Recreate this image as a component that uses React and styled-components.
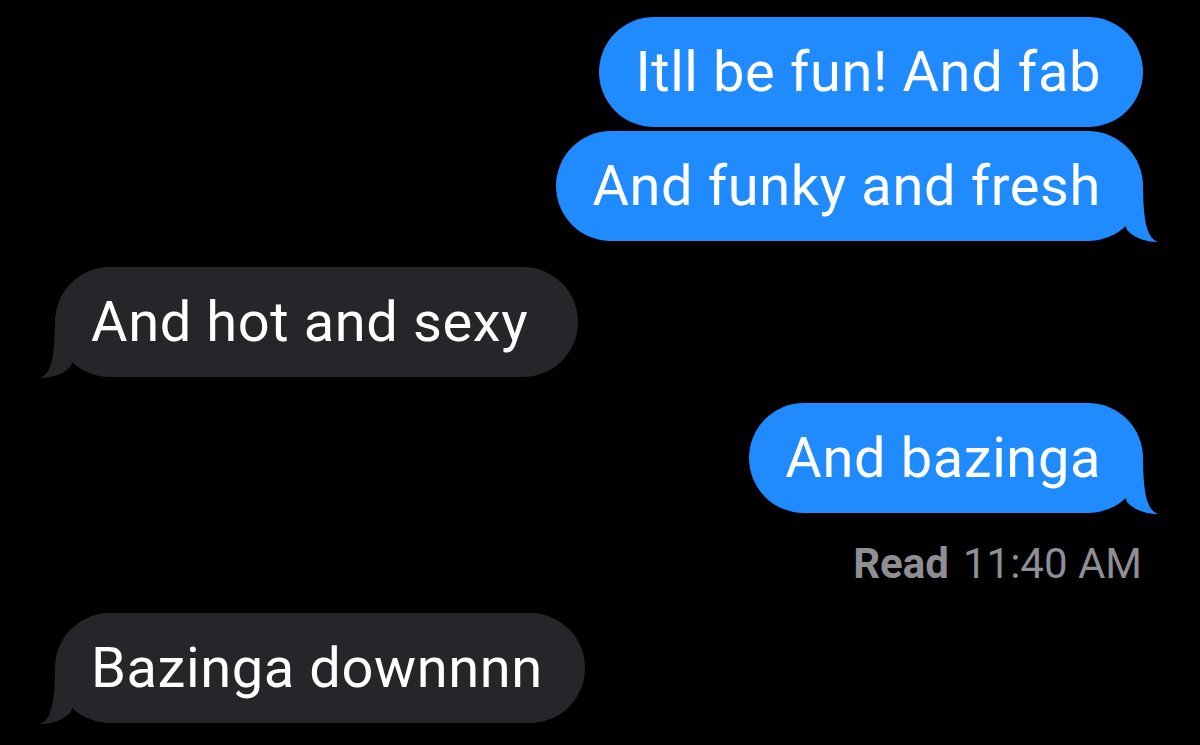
import styled, { createGlobalStyle } from "styled-components";

const GlobalStyle = createGlobalStyle`
  html, body {
    margin: 0;
    padding: 0;
    background: #000;
  }
  body {
    font-family: Roboto, "Liberation Sans", Arial, sans-serif;
    -webkit-font-smoothing: antialiased;
  }
`;

const Thread = styled.div`
  width: 1200px;
  height: 745px;
  overflow: hidden;
  background: #000;
  display: flex;
  flex-direction: column;
  padding-top: 17px;
  box-sizing: border-box;
`;

const Row = styled.div`
  display: flex;
  justify-content: ${(props) => (props.$sent ? "flex-end" : "flex-start")};
  padding: ${(props) => (props.$sent ? "0 57px 0 0" : "0 0 0 55px")};
  margin-top: ${(props) => props.$gap || 0}px;
`;

const Bubble = styled.div`
  position: relative;
  height: 110px;
  display: flex;
  align-items: center;
  box-sizing: border-box;
  padding: 0 42px 0 36px;
  border-radius: 55px;
  background: ${(props) => (props.$sent ? "#1f8bff" : "#262529")};
  color: #fff;
  font-size: 56px;
  line-height: 1;
  letter-spacing: 0.6px;
  white-space: nowrap;
  min-width: ${(props) => props.$minWidth || 0}px;
`;

const Tail = styled.svg`
  position: absolute;
  bottom: -1px;
  width: 40px;
  height: 60px;
  ${(props) =>
    props.$sent
      ? "right: -15px;"
      : "left: -15px; transform: scaleX(-1);"}
`;

const Receipt = styled.div`
  display: flex;
  justify-content: flex-end;
  gap: 14px;
  padding-right: 58px;
  margin-top: 30px;
  font-size: 42px;
  line-height: 1;
  color: #8e8e93;
`;

const ReceiptLabel = styled.span`
  font-weight: 700;
`;

const ReceiptTime = styled.span`
  font-weight: 400;
`;

const BubbleTail = ({ sent }) => (
  <Tail $sent={sent} viewBox="0 0 40 60">
    <path
      d="M25 0 C25 44 30 56 40 60 C30 60 17 57 9 48 L0 20 L0 0 Z"
      fill={sent ? "#1f8bff" : "#262529"}
    />
  </Tail>
);

const Message = ({ sent, tail, gap, minWidth, children }) => (
  <Row $sent={sent} $gap={gap}>
    <Bubble $sent={sent} $minWidth={minWidth}>
      {children}
      {tail && <BubbleTail sent={sent} />}
    </Bubble>
  </Row>
);

const App = () => {
  return (
    <>
      <GlobalStyle />
      <Thread>
        <Message sent>Itll be fun! And fab</Message>
        <Message sent tail gap={4}>
          And funky and fresh
        </Message>
        <Message tail gap={26} minWidth={523}>
          And hot and sexy
        </Message>
        <Message sent tail gap={26}>
          And bazinga
        </Message>
        <Receipt>
          <ReceiptLabel>Read</ReceiptLabel>
          <ReceiptTime>11:40 AM</ReceiptTime>
        </Receipt>
        <Message tail gap={28} minWidth={523}>
          Bazinga downnnn
        </Message>
      </Thread>
    </>
  );
};

export default App;
